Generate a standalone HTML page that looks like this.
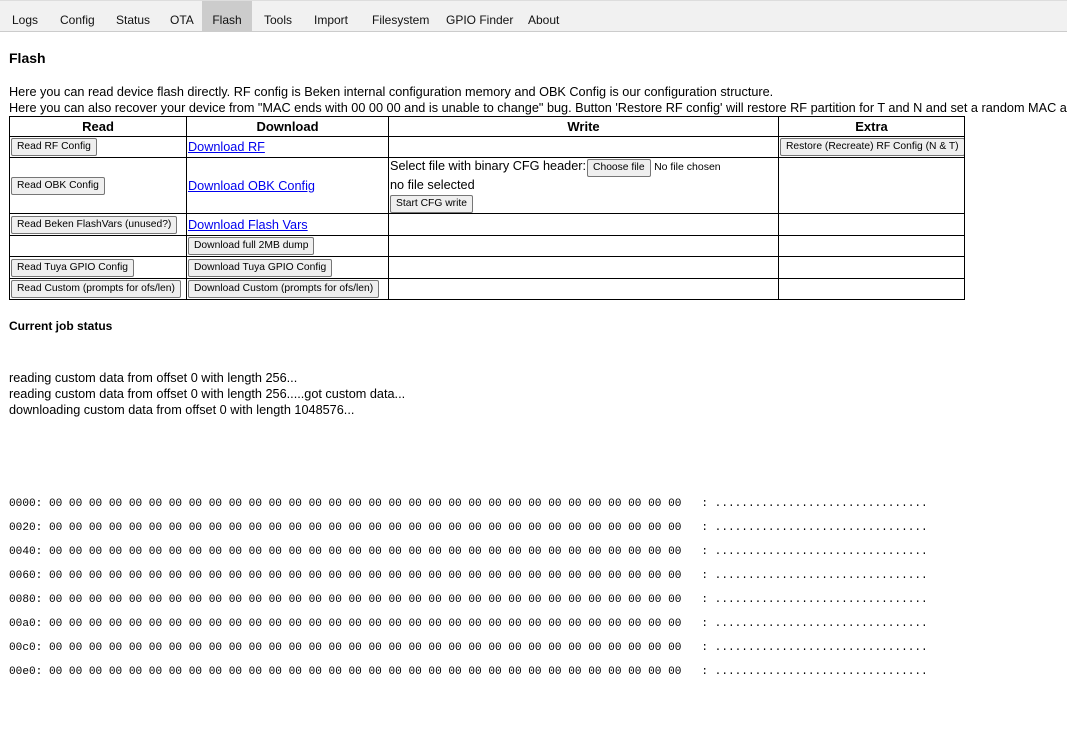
<!DOCTYPE html>
<html><head><meta charset="utf-8"><style>
*{margin:0;padding:0;box-sizing:border-box}
html,body{width:1067px;height:733px;overflow:hidden}
body{background:#fff;font-family:"Liberation Sans",sans-serif;color:#000;position:relative}
.tabs{position:absolute;left:0;top:0;width:1067px;height:32px;background:#f1f1f1;border-top:1px solid #ddd;border-bottom:1px solid #ccc}
.tab{position:absolute;top:0;height:31px;line-height:38px;font-size:12px;color:#111}
.tab.act{background:#ccc;text-align:center}
.abs{position:absolute;white-space:nowrap}
h3{font-size:14px;font-weight:bold}
.p{font-size:12.7px;line-height:16px}
.clip{position:absolute;left:0;top:0;width:1067px;height:733px;overflow:hidden}
table{position:absolute;left:9px;top:116px;border-collapse:collapse;font-size:12.7px;table-layout:fixed;width:955px}
td,th{border:1px solid #000;padding:0 1px;vertical-align:middle;white-space:nowrap;overflow:hidden}
th{font-size:13px;height:20px}
.btn{display:inline-block;font-size:10.3px;background:#efefef;border:1px solid #767676;border-radius:2px;padding:0 5px;height:18px;line-height:16px;color:#000}
a{color:#0000ee;text-decoration:underline;font-size:12.7px}
.hex{font-family:"Liberation Mono",monospace;font-size:11.1px;line-height:24px;white-space:pre;position:absolute;left:9px;top:492px}
</style></head><body><div class="clip">
<div class="tabs">
<div class="tab" style="left:12px">Logs</div>
<div class="tab" style="left:60px">Config</div>
<div class="tab" style="left:116px">Status</div>
<div class="tab" style="left:170px">OTA</div>
<div class="tab act" style="left:202px;width:50px">Flash</div>
<div class="tab" style="left:264px">Tools</div>
<div class="tab" style="left:314px">Import</div>
<div class="tab" style="left:372px">Filesystem</div>
<div class="tab" style="left:446px">GPIO Finder</div>
<div class="tab" style="left:528px">About</div>
</div>
<h3 class="abs" style="left:9px;top:50px">Flash</h3>
<div class="abs p" style="left:9px;top:84px">Here you can read device flash directly. RF config is Beken internal configuration memory and OBK Config is our configuration structure.<br>Here you can also recover your device from "MAC ends with 00 00 00 and is unable to change" bug. Button 'Restore RF config' will restore RF partition for T and N and set a random MAC address.</div>
<table>
<colgroup><col style="width:177px"><col style="width:202px"><col style="width:390px"><col style="width:186px"></colgroup>
<tr><th>Read</th><th>Download</th><th>Write</th><th>Extra</th></tr>
<tr style="height:21px"><td><span class="btn">Read RF Config</span></td><td><a>Download RF</a></td><td></td><td><span class="btn">Restore (Recreate) RF Config (N &amp; T)</span></td></tr>
<tr style="height:56px"><td><span class="btn">Read OBK Config</span></td><td><a>Download OBK Config</a></td><td style="line-height:17px">Select file with binary CFG header:<span class="btn" style="margin-left:1px">Choose file</span> <span style="font-size:10.5px">No file chosen</span><br>no file selected<br><span class="btn">Start CFG write</span></td><td></td></tr>
<tr style="height:22px"><td><span class="btn">Read Beken FlashVars (unused?)</span></td><td><a>Download Flash Vars</a></td><td></td><td></td></tr>
<tr style="height:21px"><td></td><td><span class="btn">Download full 2MB dump</span></td><td></td><td></td></tr>
<tr style="height:22px"><td><span class="btn">Read Tuya GPIO Config</span></td><td><span class="btn">Download Tuya GPIO Config</span></td><td></td><td></td></tr>
<tr style="height:21px"><td><span class="btn">Read Custom (prompts for ofs/len)</span></td><td><span class="btn">Download Custom (prompts for ofs/len)</span></td><td></td><td></td></tr>
</table>
<div class="abs" style="left:9px;top:319px;font-size:12px;font-weight:bold">Current job status</div>
<div class="abs p" style="left:9px;top:370px">reading custom data from offset 0 with length 256...<br>reading custom data from offset 0 with length 256.....got custom data...<br>downloading custom data from offset 0 with length 1048576...</div>
<div class="hex">0000: 00 00 00 00 00 00 00 00 00 00 00 00 00 00 00 00 00 00 00 00 00 00 00 00 00 00 00 00 00 00 00 00   : ................................
0020: 00 00 00 00 00 00 00 00 00 00 00 00 00 00 00 00 00 00 00 00 00 00 00 00 00 00 00 00 00 00 00 00   : ................................
0040: 00 00 00 00 00 00 00 00 00 00 00 00 00 00 00 00 00 00 00 00 00 00 00 00 00 00 00 00 00 00 00 00   : ................................
0060: 00 00 00 00 00 00 00 00 00 00 00 00 00 00 00 00 00 00 00 00 00 00 00 00 00 00 00 00 00 00 00 00   : ................................
0080: 00 00 00 00 00 00 00 00 00 00 00 00 00 00 00 00 00 00 00 00 00 00 00 00 00 00 00 00 00 00 00 00   : ................................
00a0: 00 00 00 00 00 00 00 00 00 00 00 00 00 00 00 00 00 00 00 00 00 00 00 00 00 00 00 00 00 00 00 00   : ................................
00c0: 00 00 00 00 00 00 00 00 00 00 00 00 00 00 00 00 00 00 00 00 00 00 00 00 00 00 00 00 00 00 00 00   : ................................
00e0: 00 00 00 00 00 00 00 00 00 00 00 00 00 00 00 00 00 00 00 00 00 00 00 00 00 00 00 00 00 00 00 00   : ................................</div>
</div></body></html>
